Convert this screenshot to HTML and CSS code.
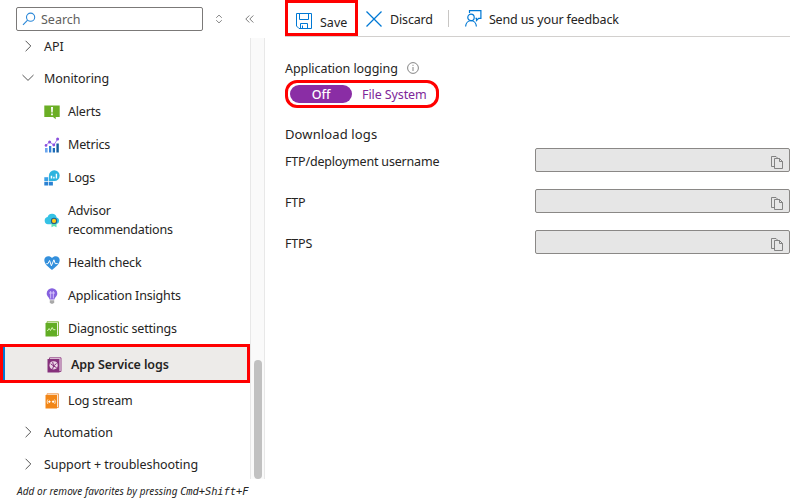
FILE: index.html
```html
<!DOCTYPE html>
<html lang="en">
<head>
<meta charset="utf-8">
<title>App Service logs</title>
<link rel="stylesheet" href="styles.css">
</head>
<body>
<div class="app">
  <aside class="sidebar">
    <div class="search-row">
      <div class="search">
        <svg width="14" height="14" viewBox="0 0 14 14" fill="none" stroke="#2b88d8" stroke-width="1.1"><circle cx="8.6" cy="5.2" r="4.1"/><path d="M5.6 8.1 1 12.8"/></svg>
        <span>Search</span>
      </div>
      <svg class="sort" width="8" height="10" viewBox="0 0 8 10" fill="none" stroke="#7b7b7b" stroke-width=".9"><path d="M1.2 3.800 4 1.100l2.800 2.700M1.200 6.200 4 8.900l2.800-2.700"/></svg>
      <svg class="collapse" width="9" height="10" viewBox="0 0 9 10" fill="none" stroke="#6b6b6b" stroke-width=".9"><path d="M4.300 1.500.8 5l3.500 3.500M8.300 1.500 4.800 5l3.500 3.500"/></svg>
    </div>
    <div class="scroll-area">
      <nav class="menu">
        <div class="group first"><svg class="chev" width="12" height="12" viewBox="0 0 12 12"><path d="M3.6.8 8.8 6l-5.2 5.2"/></svg><span>API</span></div>
        <div class="group open"><svg class="chev" width="12" height="12" viewBox="0 0 12 12"><path d="M.5 3 6 8.4 11.5 3"/></svg><span>Monitoring</span></div>

        <div class="item"><svg width="16" height="16" viewBox="0 0 16 16"><path fill="#6bae25" d="M.3 1.500h15.400v11.500h-4v2.200L9 13H.3z"/><path fill="#fff" d="M7 3h2l-.3 5.500H7.300zM7.100 9.500h1.800v1.800H7.100z"/></svg><span>Alerts</span></div>
        <div class="item"><svg width="16" height="16" viewBox="0 0 16 16"><path fill="#6ba6ee" d="M1 11h2.6v4.5H1z"/><path fill="#3482d8" d="M5 9h2.3v6.5H5z"/><path fill="#1a6bb8" d="M8.7 11H11v4.5H8.7z"/><path fill="#155c9c" d="M12.4 6.5h2.4v9h-2.4z"/><path fill="none" stroke="#a67af4" d="m2 8.4 3.6-3.5L9.8 8l3.8-5.8"/><g fill="#8a50dc"><circle cx="2" cy="8.4" r="1.3"/><circle cx="5.6" cy="4.9" r="1.5"/><circle cx="9.8" cy="8" r="1.4"/><circle cx="13.6" cy="2" r="1.5"/></g></svg><span>Metrics</span></div>
        <div class="item"><svg width="16" height="16" viewBox="0 0 16 16"><path fill="#3ba0e6" d="M.3 7.200h3.900V11H.3z"/><path fill="#2b82d2" d="M.3 11.700h3.900v3.800H.3zM4.900 11.700h4v3.800h-4z"/><path fill="#2fb4df" d="M4.900 11V5.800A5.400 5.400 0 1 1 10.300 11z"/><path fill="#fff" d="M6.700 5.800h1.500v2.800H6.700zM9.200 6.800h1.400v1.800H9.200zM11.700 3.800h1.400v4.800h-1.400z"/></svg><span>Logs</span></div>
        <div class="item tall"><svg width="16" height="16" viewBox="0 0 16 16"><path fill="#35c2e5" d="M4 12.200a3.700 3.700 0 0 1-.4-7.300 4.700 4.700 0 0 1 9 .5 3.500 3.500 0 0 1-.3 6.800z"/><path fill="#5ce0b5" d="M7.500 10.500h5v4.800L10 14l-2.500 1.300z"/><circle cx="10" cy="8.900" r="2.600" fill="#ffca17" stroke="#245e8c" stroke-width="1.100"/></svg><span>Advisor<br>recommendations</span></div>
        <div class="item"><svg width="16" height="16" viewBox="0 0 16 16"><path fill="#3490dc" d="M8 15C5 12.500.3 9.500.3 5.100.3 1.100 5.500-.1 8 3.100c2.500-3.200 7.700-2 7.700 2C15.700 9.500 11 12.500 8 15z"/><path fill="none" stroke="#fff" d="M2.300 8.700h1.600l1.700-3.200 1.800 5.300 2.500-6 1.300 3.800h2.500"/></svg><span>Health check</span></div>
        <div class="item"><svg width="16" height="16" viewBox="0 0 16 16"><path fill="#8661df" d="M8 .3a5.200 5.200 0 0 1 5.300 5.300c0 3-2.500 3.400-2.800 6h-5c-.3-2.600-2.800-3-2.800-6A5.200 5.200 0 0 1 8 .3z"/><path fill="#a9a9a9" d="M5.800 12.200h4.400v2L9 15.700H7l-1.200-1.500z"/><path fill="none" stroke="#dccdff" stroke-width=".9" d="M5 5h6M6.700 3v7.500M9.300 3v7.500"/></svg><span>Application Insights</span></div>
        <div class="item"><svg width="16" height="16" viewBox="0 0 16 16"><path fill="#e8f3dc" stroke="#82b83f" d="M3 .8h11.500v13.700H3z"/><path fill="#62ad24" d="M1.500 2H13v13.500H1.500z"/><path fill="none" stroke="#d9f5b8" d="m3.300 10 1.800-2.500 1.400 2 1.700-3 1.200 2.200h2"/></svg><span>Diagnostic settings</span></div>
        <div class="item selected"><svg width="16" height="16" viewBox="0 0 16 16"><path fill="#f4e7f1" stroke="#97498b" d="M2.500.8h11.500v13.700H2.500z"/><path fill="#85307b" d="M.5 2h12v13.500H.5z"/><circle cx="6.600" cy="8.300" r="4.100" fill="#ebd5e7"/><path fill="none" stroke="#85307b" d="m3.600 6.700 3 2.300 2.900-2.500M6.600 9l-1 3M6.600 9l3 1.600M5.700 5l.9 4"/></svg><span>App Service logs</span></div>
        <div class="item last"><svg width="16" height="16" viewBox="0 0 16 16"><path fill="#fce7d3" stroke="#efa05c" d="M3 .8h11.500v13.700H3z"/><path fill="#f28617" d="M1.500 2H13v13.500H1.500z"/><path fill="none" stroke="#fff3dc" stroke-width=".9" d="M3.900 6.500c-.9 1.300-.9 3.100 0 4.400M10.600 6.500c.9 1.300.9 3.100 0 4.400"/><path fill="#fff" d="m5.400 7.300 1.400 1.400-1.400 1.400L4 8.700zM9.100 7.300l1.400 1.400-1.400 1.400-1.400-1.400z"/></svg><span>Log stream</span></div>

        <div class="group"><svg class="chev" width="12" height="12" viewBox="0 0 12 12"><path d="M3.600.8 8.800 6l-5.200 5.200"/></svg><span>Automation</span></div>
        <div class="group"><svg class="chev" width="12" height="12" viewBox="0 0 12 12"><path d="M3.600.8 8.800 6l-5.200 5.200"/></svg><span>Support + troubleshooting</span></div>
      </nav>
      <div class="track"><div class="thumb"></div></div>
    </div>
    <div class="hint">Add or remove favorites by pressing <kbd>Cmd+Shift+F</kbd></div>
  </aside>

  <main class="content">
    <div class="toolbar">
      <div class="save"><svg width="16" height="16" viewBox="0 0 16 16" fill="none" stroke="#0078d4"><path d="M.5.500h15v15H3L.5 13zM3.500.500v6h9v-6M4.500 15.500v-5h7v5M6.500 12.500v3"/></svg><span>Save</span></div>
      <div class="discard"><svg width="16" height="16" viewBox="0 0 16 16" fill="none" stroke="#0078d4" stroke-width="1.300"><path d="m.5.500 15 15M15.500.500l-15 15"/></svg><span>Discard</span></div>
      <div class="divider"></div>
      <div class="feedback"><svg width="17" height="17" viewBox="0 0 17 17" fill="none" stroke="#0078d4" stroke-width="1.200"><path d="M4.500 3V.7h11.400v7.600h-2.200l-2.200 2.200V8.300h-1"/><circle cx="6" cy="7.400" r="3.200"/><path d="M.6 16.500c.2-3.400 2.500-5.800 5.400-5.800s5.200 2.400 5.400 5.800"/></svg><span>Send us your feedback</span></div>
    </div>
    <div class="label-row"><span>Application logging</span><svg width="12" height="12" viewBox="0 0 12 12" fill="none" stroke="#777" stroke-width=".9"><circle cx="6" cy="6" r="5.400"/><path d="M6 5v4M6 2.800v1.100"/></svg></div>
    <div class="toggle"><span class="on">Off</span><span class="off">File System</span></div>
    <h2 class="heading">Download logs</h2>
    <div class="field"><span>FTP/deployment username</span><div class="box"><svg width="12" height="13" viewBox="0 0 12 13" fill="none" stroke="#777" stroke-width=".9"><path d="M3.500 10.500h-3v-10h4.500l1.500 1.500M3.500 2.500h5l3 3v7h-8zM8.500 2.500v3h3"/></svg></div></div>
    <div class="field"><span>FTP</span><div class="box"><svg width="12" height="13" viewBox="0 0 12 13" fill="none" stroke="#777" stroke-width=".9"><path d="M3.500 10.500h-3v-10h4.500l1.500 1.500M3.500 2.500h5l3 3v7h-8zM8.500 2.500v3h3"/></svg></div></div>
    <div class="field"><span>FTPS</span><div class="box"><svg width="12" height="13" viewBox="0 0 12 13" fill="none" stroke="#777" stroke-width=".9"><path d="M3.500 10.500h-3v-10h4.500l1.500 1.500M3.500 2.500h5l3 3v7h-8zM8.500 2.500v3h3"/></svg></div></div>
  </main>
</div>
</body>
</html>
```
FILE: styles.css
```css
* { box-sizing: border-box; }
body {
  margin: 0;
  background: #fff;
  color: #252423;
  font: 12.5px/19px "Noto Sans", "Open Sans", sans-serif;
}
svg { flex: none; display: block; }
.app { display: flex; width: 810px; height: 502px; overflow: hidden; }

.sidebar { width: 265px; display: flex; flex-direction: column; }
.search-row { height: 38px; display: flex; align-items: center; padding-left: 16px; flex: none; }
.search {
  width: 187px; height: 24px;
  display: flex; align-items: center; gap: 5px;
  padding-left: 5px;
  border: 1px solid #7b7978; border-radius: 2px;
  color: #605e5c;
}
.sort { margin-left: 12px; }
.collapse { margin-left: 22px; }

.scroll-area { display: flex; height: 441px; flex: none; }
.menu { width: 250px; }
.group { height: 32px; display: flex; align-items: center; gap: 10px; padding-left: 22px; letter-spacing: -0.06px; }
.group.first { height: 24px; padding-bottom: 8px; }
.group.open { margin-bottom: 1px; }
.chev { fill: none; stroke: #555; stroke-width: 1; }
.item { height: 33px; display: flex; align-items: center; gap: 8px; padding-left: 44px; letter-spacing: -0.17px; }
.item.tall { height: 52px; }
.item.selected {
  height: 39px;
  margin: -1px 0 1px;
  padding: 2px 0 0 44px;
  border: 3px solid #f00;
  background: #edebe9;
  box-shadow: inset 2px 0 #0078d4;
  font-weight: 600;
  letter-spacing: -0.1px;
}
.item.last { margin-bottom: -1px; }
.track { width: 15px; display: flex; align-items: flex-end; justify-content: center; background: #fafafa; border: solid #e8e8e8; border-width: 0 1px; }
.thumb { width: 8px; height: 119px; border-radius: 4px; background: #c1c1c1; }
.hint { padding: 3px 0 0 17px; font-size: 10px; font-style: italic; letter-spacing: 0.06px; white-space: nowrap; }
.hint kbd { font: italic 10.5px "DejaVu Sans Mono", monospace; letter-spacing: -0.12px; }

.content { width: 505px; margin-left: 20px; }
.toolbar { height: 37px; display: flex; border-bottom: 1px solid #d2d0ce; letter-spacing: -0.15px; }
.save { width: 73px; height: 36px; display: flex; align-items: center; gap: 8px; padding: 5px 0 0 8px; border: 3px solid #f00; letter-spacing: 0; }
.save span { padding-top: 3px; }
.discard, .feedback { display: flex; align-items: center; gap: 8px; height: 37px; }
.discard span, .feedback span { padding-top: 1px; }
.feedback { gap: 7px; }
.discard { margin-left: 8px; }
.divider { width: 1px; height: 17px; margin: 10px 16px 0 15px; background: #c8c6c4; }
.label-row { display: flex; align-items: center; gap: 9px; margin-top: 21px; height: 20px; letter-spacing: -0.06px; }
.toggle { display: flex; align-items: center; width: 154px; height: 28px; margin-top: 2px; padding-left: 2px; border: 3px solid #f00; border-radius: 12px; }
.on { width: 62px; height: 18px; line-height: 19px; border-radius: 9px; background: #8a2da5; color: #fff; text-align: center; font-weight: 500; }
.off { margin-left: 10px; color: #7d2799; letter-spacing: -0.1px; }
.heading { margin: 16px 0 4px; font-size: 13px; letter-spacing: 0.12px; font-weight: 400; line-height: 20px; }
.field { display: flex; height: 41px; letter-spacing: -0.19px; }
.field > span { width: 250px; padding-top: 4px; }
.box { width: 255px; height: 24px; display: flex; align-items: center; justify-content: flex-end; padding: 5px 6px 0 0; border: 1px solid #8a8886; border-radius: 2px; background: #e6e6e6; }
```
